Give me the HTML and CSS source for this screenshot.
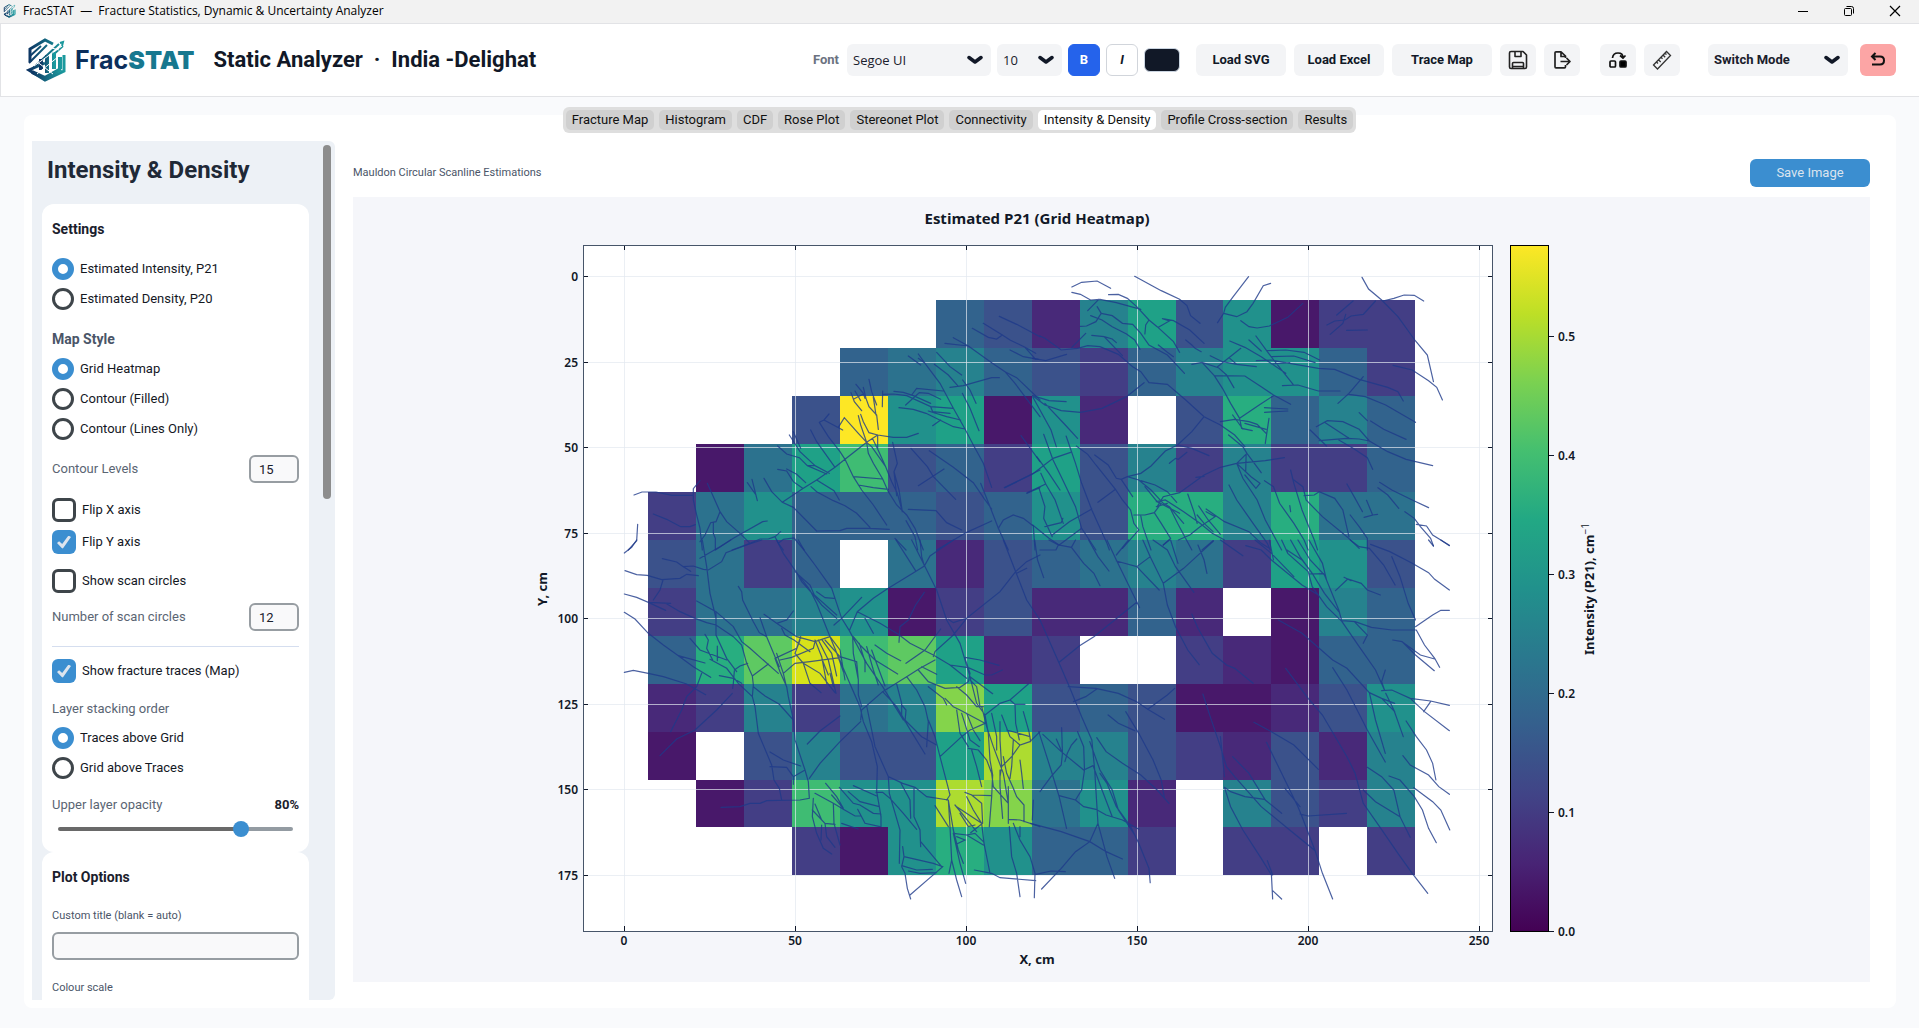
FILE: index.html
```html
<!DOCTYPE html>
<html lang="en">
<head>
<meta charset="utf-8">
<title>FracSTAT</title>
<link rel="stylesheet" href="styles.css">
</head>
<body>
<svg class="defs" width="0" height="0" aria-hidden="true">
  <defs>
    <linearGradient id="brand" x1="0" y1="0" x2="1" y2="0"><stop offset="0" stop-color="#0d3563"/><stop offset="1" stop-color="#1b9a9e"/></linearGradient>
    <symbol id="mark" viewBox="0 0 44 44">
      <g fill="none" stroke="url(#brand)" stroke-width="3">
        <path d="M4 24V11L19 2l8 4M38 17v16L19 42 3 32l16-7"/>
        <path d="M4 18 15 8M3 25 21 7M6 31 33 6M34 5l3-1-1 4M28 16l9-8" stroke-width="2"/>
        <path d="M15 32V21M21 35V17M28 31V14" stroke-width="4"/>
        <path d="M34 19v12M6 34l13 6 16-9" stroke-width="4"/>
      </g>
      <path d="M8 28 36 8M11 36 38 14M10 23 27 36M22 9 33 12" stroke="#fff" stroke-width="1" fill="none"/>
    </symbol>
    <symbol id="chevron" viewBox="0 0 16 10"><path d="M2 2.500 8 7l6-4.500" fill="none" stroke="#111827" stroke-width="3.500" stroke-linecap="round" stroke-linejoin="round"/></symbol>
  </defs>
</svg>

<div class="titlebar">
  <svg class="app-icon"><use href="#mark"/></svg>
  <span class="app-name">FracSTAT  —  Fracture Statistics, Dynamic &amp; Uncertainty Analyzer</span>
  <button class="win" aria-label="Minimise"><svg width="12" height="12"><path d="M1 6.500h10" stroke="#000" fill="none"/></svg></button>
  <button class="win" aria-label="Restore"><svg width="12" height="12" fill="none" stroke="#000"><rect x="1.500" y="3.500" width="7" height="7" rx="1"/><path d="M3.500 1.500h5q2 0 2 2v5"/></svg></button>
  <button class="win" aria-label="Close"><svg width="12" height="12"><path d="m1 1 10 10M11 1 1 11" stroke="#000" stroke-width="1.200" fill="none"/></svg></button>
</div>

<header class="toolbar">
  <svg class="logo"><use href="#mark"/></svg>
  <span class="wordmark">Frac<b>STAT</b></span>
  <h1>Static Analyzer &nbsp;·&nbsp; India -Delighat</h1>
  <div class="tools fonts">
    <label for="family">Font</label>
    <span class="pick family"><select id="family"><option>Segoe UI</option></select><svg><use href="#chevron"/></svg></span>
    <span class="pick size"><select aria-label="Font size"><option>10</option></select><svg><use href="#chevron"/></svg></span>
    <button class="toggle on">B</button>
    <button class="toggle"><i>I</i></button>
    <button class="swatch" aria-label="Text colour"></button>
  </div>
  <div class="tools files">
    <button class="btn">Load SVG</button>
    <button class="btn">Load Excel</button>
    <button class="btn wide">Trace Map</button>
    <button class="btn icon" aria-label="Save"><svg width="20" height="20" fill="none" stroke="#222" stroke-width="1.600" stroke-linejoin="round"><path d="M1.500 3q0-1.500 1.500-1.500h12L18.500 5v12q0 1.500-1.500 1.500H3q-1.500 0-1.500-1.500zM7 1.500v5h6v-5M4.500 18.500v-5q0-1 1-1h9q1 0 1 1v5M4.500 16.500h11"/></svg></button>
    <button class="btn icon" aria-label="Export"><svg width="20" height="20" fill="none" stroke="#222" stroke-width="1.700" stroke-linejoin="round"><path d="M13.500 8V6L9 1.800H4q-1 0-1 1v14q0 1 1 1h8.500q1 0 1-1V15M9 2v4.500h4.500M8.500 11.500h9M14.500 8l3.500 3.500-3.500 3.500"/></svg></button>
  </div>
  <div class="tools">
    <button class="btn icon" aria-label="Swap"><svg width="20" height="20" fill="none" stroke="#111" stroke-width="1.700"><rect x="2" y="11" width="5.500" height="6" rx="1"/><rect x="12" y="11" width="6" height="6" rx="1" fill="#000"/><path d="M4.500 8Q5 3 10 3t5 4.500M12 5.500l3 2.500 2.500-2.500"/></svg></button>
    <button class="btn icon" aria-label="Measure"><svg width="20" height="20" fill="none" stroke="#333" stroke-width="1.300"><path d="m1.500 15 13-13.500 4 4-13 13.500zM4.500 12l1.500 1.500M6.500 9.800l2.200 2.200M9 7.300l1.500 1.500M11 5l2.200 2.200M13 3l1.500 1.500"/></svg></button>
  </div>
  <div class="tools mode">
    <span class="pick switch"><select aria-label="Mode"><option>Switch Mode</option></select><svg><use href="#chevron"/></svg></span>
    <button class="btn icon back" aria-label="Back"><svg width="20" height="20" fill="none" stroke="#111" stroke-width="2"><path d="M7.500 3 4 6.500 7.500 10M4 6.500h8q4 0 4 4t-4 4H4"/></svg></button>
  </div>
</header>

<nav class="tabs">
  <button>Fracture Map</button><button>Histogram</button><button>CDF</button><button>Rose Plot</button><button>Stereonet Plot</button><button>Connectivity</button><button class="current">Intensity &amp; Density</button><button>Profile Cross-section</button><button>Results</button>
</nav>

<main class="panel">
  <aside class="sidebar">
    <div class="scroll">
      <h2>Intensity &amp; Density</h2>
      <section class="card">
        <h3>Settings</h3>
        <div class="group after-head">
          <label class="radio"><input type="radio" name="measure" checked>Estimated Intensity, P21</label>
          <label class="radio"><input type="radio" name="measure">Estimated Density, P20</label>
        </div>
        <h4>Map Style</h4>
        <div class="group">
          <label class="radio"><input type="radio" name="style" checked>Grid Heatmap</label>
          <label class="radio"><input type="radio" name="style">Contour (Filled)</label>
          <label class="radio"><input type="radio" name="style">Contour (Lines Only)</label>
        </div>
        <div class="field levels"><label for="levels">Contour Levels</label><input id="levels" type="text" value="15"></div>
        <div class="group flips">
          <label class="check"><input type="checkbox">Flip X axis</label>
          <label class="check"><input type="checkbox" checked>Flip Y axis</label>
        </div>
        <label class="check scan"><input type="checkbox">Show scan circles</label>
        <div class="field"><label for="circles">Number of scan circles</label><input id="circles" type="text" value="12"></div>
        <hr>
        <label class="check"><input type="checkbox" checked>Show fracture traces (Map)</label>
        <p class="sub">Layer stacking order</p>
        <div class="group">
          <label class="radio"><input type="radio" name="stack" checked>Traces above Grid</label>
          <label class="radio"><input type="radio" name="stack">Grid above Traces</label>
        </div>
        <div class="sub split"><label for="opacity">Upper layer opacity</label><output for="opacity">80%</output></div>
        <input id="opacity" class="slider" type="range" min="0" max="100" value="80">
      </section>
      <section class="card">
        <h3>Plot Options</h3>
        <label class="small" for="custom">Custom title (blank = auto)</label>
        <input id="custom" class="full" type="text">
        <p class="small">Colour scale</p>
      </section>
    </div>
    <div class="bar"></div>
  </aside>

  <section class="view">
    <div class="view-head"><span>Mauldon Circular Scanline Estimations</span><button class="save">Save Image</button></div>
    <div class="plot">
      <svg viewBox="353 197 1517 785" id="chart" role="img" aria-label="Estimated P21 grid heatmap">
        <defs>
          <linearGradient id="scale" x1="0" y1="1" x2="0" y2="0">
            <stop offset="0" stop-color="#440154"/><stop offset=".1" stop-color="#482475"/><stop offset=".2" stop-color="#414487"/><stop offset=".3" stop-color="#355f8d"/><stop offset=".4" stop-color="#2a788e"/><stop offset=".5" stop-color="#21918c"/><stop offset=".6" stop-color="#22a884"/><stop offset=".7" stop-color="#44bf70"/><stop offset=".8" stop-color="#7ad151"/><stop offset=".9" stop-color="#bddf26"/><stop offset="1" stop-color="#fde725"/>
          </linearGradient>
        </defs>
        <rect x="583" y="245" width="910" height="686" fill="#fff"/>
        <g id="cells" shape-rendering="crispEdges"></g>
        <path class="grid" d="M624.500 246v685M795.500 246v685M966.500 246v685M1137.500 246v685M1308.500 246v685M1479.500 246v685M584 276.500h908M584 362.500h908M584 447.500h908M584 533.500h908M584 618.500h908M584 704.500h908M584 789.500h908M584 875.500h908"/>
        <g class="traces">
          <path transform="translate(520 190) scale(.33333)" d="M342 915 366 906 408 906 456 916 520 916 520 896 540 872M520 896 520 930 530 975 540 1015 547 1080M400 972 440 988 482 1010 510 1010 526 1004M353 1003 350 1052 325 1080M562 880 600 965 620 995 660 1030 690 1060M600 965 588 995 572 998 555 1035 540 1055M580 998 580 1030 586 1045 586 1080M586 1080 640 1045 728 995 742 993M636 1080 690 1060 720 1047 745 1047 765 1040 782 1025M765 1040 775 1060 790 1048 822 1044 852 1080M775 1060 790 1080M682 878 708 915M696 868 712 932M732 865 755 905 787 937 820 952 890 1023M787 937 850 895 890 870 945 832 975 808 1040 757 1073 735M873 890 890 905 940 932 975 947 1010 970 1050 1012M890 870 942 902 958 930M773 838 800 843 820 875 848 895M800 837 830 853 857 878M773 768 800 792 838 803 862 827 885 827 928 850M862 827 920 852M808 735 840 785 885 827M820 725 842 775M872 720 890 755 945 832M898 697 925 740 960 785 975 808 1000 860 1025 900 1060 945 1100 1005M898 697 912 690 927 672M912 690 950 710 968 720M955 712 973 683 1015 730 1040 757 1055 770 1097 830M1015 677 1022 705 1040 757 1045 790 1060 820 1088 867 1105 905 1130 945 1160 975 1185 1015 1210 1080M1022 673 1030 695 1047 728 1073 735 1120 742 1160 742 1195 730M1057 745 1073 777 1097 830 1115 875 1132 910 1147 965M1073 735 1073 777M1000 860 1088 867M1015 885 1060 893 1105 898M993 608 1003 635 1025 662M1005 603 1022 632M1008 583 1030 610 1035 625M1000 628 1030 612M1030 592 1038 625 1047 650 1070 675 1075 718M1047 568 1055 605 1070 645M1060 622 1068 675M1088 603 1087 650M1088 613 1120 612 1160 617 1232 650 1300 655M1122 604 1150 607 1180 617 1232 640M1157 645 1198 608 1225 610 1262 628M1175 615 1190 595 1270 603M1137 653 1180 658 1218 670 1300 710 1335 717M1232 650 1238 665 1290 670M1225 663 1280 680 1322 690M1238 707 1262 690M1165 498 1202 525M1195 492 1215 520 1260 580 1300 655 1335 717 1360 765 1390 820 1415 892M1195 505 1215 520M1250 487 1290 530 1325 555M1243 523 1285 555 1313 587M1290 592 1330 587 1415 563 1438 563M1328 570 1350 600 1368 640M1327 610 1350 655 1377 722M1275 460 1345 468M1300 443 1345 468 1415 518 1455 545 1485 580 1560 680M1455 545 1490 563 1560 630M1357 415 1405 442 1430 447 1447 435M1390 400 1447 435 1470 450 1515 472 1547 508M1438 379 1490 403 1560 440M1470 480 1510 500 1555 508M1515 472 1547 490M1118 757 1132 820 1122 845 1137 900 1147 965M1122 845 1130 917M1173 775 1222 830 1240 860 1307 928M1195 887 1272 837M1228 782 1300 832 1360 878 1392 925 1415 957M1382 880 1410 950 1435 1015 1465 1080M1165 958 1248 962 1280 998 1325 1020M890 1023 960 1022 980 1015 1050 1015 1108 1018M1158 992 1185 1040 1193 1080M1125 1045 1158 1080M1250 1080 1340 1027 1415 993M1435 1015 1450 990 1480 975 1510 985 1540 1008 1545 1080M1453 893 1500 870 1560 840M1520 910 1560 893M1503 737 1560 815"/>
          <path transform="translate(1000 190) scale(.40816 .33333)" d="M176 291 200 277 238 273 271 295M176 307 197 313 222 330M266 314 290 313 312 325 335 350 365 390 385 410 425 455 440 487M222 330 245 328 285 338 345 358M215 362 242 328M238 350 248 370 235 395 212 408 197 409M248 370 275 377 300 400 325 403 345 430 365 465 410 495 452 550M222 377 250 390 275 410 310 432 330 450 343 478M365 390 357 405 355 432M388 412 415 393 398 386M398 386 425 392 465 420 500 460M388 465 410 487 425 500M98 438 110 445 150 480 190 475 215 467 245 470 290 493 325 530 345 545 365 578 410 583 455 630 500 680 540 705 575 735 600 770M176 472 210 430M225 436 255 440 300 497M255 440 275 447 285 458M80 505 112 512 163 493M330 259 395 302 440 328 458 347 467 377 490 400M609 260 570 322 552 352 548 370 533 398M548 370 580 380 605 365 620 340 645 287 663 280M590 392 610 410 630 414 660 408 705 382 742 340M887 262 903 297 935 330 975 380 1018 453 1047 495 1062 575M938 333 965 325 990 315 1015 316 1038 333M963 526 1010 540 1050 572 1070 592 1084 630M865 333 825 375M920 333 890 373 860 378 845 390 820 393 801 405M847 373 840 400 809 433M849 421 900 420M563 453 600 472 640 500 700 550M610 450 640 483M627 438 655 485 680 525 718 583M533 530 590 475M515 497 545 515 580 523 628 530M563 505 580 523M655 482 700 480 745 487 783 510M665 500 720 498 772 518M628 512 665 510 710 520 780 535 820 538 880 568 950 592 975 605 988 633M665 522 710 518M470 523 495 517 535 533 555 555 573 593M495 517 525 557 545 595 565 640 587 685 592 715M525 557 600 558 640 590 670 615 712 643M455 450 470 465 478 475 493 485M692 587 730 585 780 603 833 603M828 640 855 610 890 560M855 613 895 620 945 645 1018 697M587 685 635 645 670 617M648 653 705 657M648 667 705 663M540 695 575 688 610 695 630 703 652 730M570 675 595 717M600 700 652 718M659 685 650 760M592 715 618 722M775 710 802 692 840 695 880 718 905 753 950 785 995 808 1060 827M880 668 900 692M908 693 940 718 995 748M795 697 855 745M760 720 800 768M782 752 850 745 880 747 905 753M830 750 865 775 900 803 913 838M500 680 470 725 435 765 405 783 370 828 345 850 312 860 297 868M435 765 470 775 512 797M415 820 430 805 437 808 458 787M560 735 595 770 605 790 640 848M697 803 650 812 580 820 540 832 500 855 440 908 400 920 385 950M605 790 580 820M603 795 602 843M480 862 500 859M580 820 615 860 637 880 627 895 600 855M580 820 595 865 630 930 650 990 690 1080M561 885 580 930 620 1000 655 1060 662 1080M648 872 670 890 685 940 720 1000 745 1050 755 1080M712 840 720 880 740 960 770 1050 778 1080M720 870 742 890 750 930 790 980 850 1040 880 1075M745 917 770 915 782 905 820 925 840 960 855 1040M710 947 712 965M850 882 870 925 888 965M898 931 913 975 892 982M913 975 925 973M926 893 950 915 977 955M930 877 960 900 1010 930 1050 953M858 975 880 1010 900 1045M992 965 1015 985 1030 1010 1055 1045 1062 1068M1020 1003 1045 1008 1060 1035 1101 1066M312 860 340 870 370 900 400 940 415 950 450 1000M345 872 380 885 410 905 433 937M355 890 385 935 440 970M383 935 405 930 450 965 490 1000 520 1030 550 1050M383 950 410 940M328 975 355 975 378 968 395 940M460 912 475 965 483 1000M487 948 510 990 540 1033M505 957 550 995 610 1025 640 1060 660 1075M483 975 500 1000 522 1025M437 1050 465 1035 490 1010 527 980 505 965M297 868 325 920M240 937 283 898M232 795 265 825 285 865 297 868M187 768 215 793 235 825 283 898 300 930 320 960 328 1000 340 1020 300 1075M162 738 185 820 200 880 225 960 262 1060 268 1080M107 733 130 810 150 860 185 950 200 1015 235 1080M90 800 120 850 147 900M80 620 125 720 138 770M80 617 120 632 162 635M80 617 110 645 150 662 197 667 250 655 310 620 353 578M110 640 160 705 190 745M80 852 130 805 173 787M67 908 112 882 100 850M95 893 110 950 107 985 128 1040M112 882 135 930 155 1000M110 1010 150 998 154 985M128 1035 170 995 225 957M80 1005 120 1045 145 1065 200 1015M345 978 350 1010 370 1080M378 968 395 1000 418 1045 400 1065M415 950 435 1000 470 1080M495 1080 522 1052M900 1045 900 1080M12 893 80 852"/>
          <path transform="translate(520 540) scale(.33333)" d="M313 39 335 22 350 0M427 56 470 66 490 80 512 94M490 80 520 78 550 88 565 90 605 65 618 38 680 15 725 0M540 55 600 20 632 0M315 92 350 104 382 106 425 119 480 115 500 103 535 107M429 120 420 150 400 180M313 162 350 172 385 187 452 190M385 187 437 211M437 190 480 215 525 235 560 248 588 255 640 290 665 315 680 370 697 408M313 217 345 237 385 280 430 315 475 347 555 369M475 347 520 380 572 412M313 397 340 391 385 400 430 410 500 432 557 464M545 400 530 440 500 470 485 510 452 575M637 460 590 510 525 570 470 597 420 647M547 0 560 80 570 160 588 235 588 285 620 355 650 395M530 183 588 215 640 260 665 305 690 325 775 400M588 215 588 245M655 139 665 155 668 180 700 245 718 278 740 290M720 233 740 290M740 290 765 350 778 380M555 283 565 300 560 325 578 360M510 295 540 330 620 360M592 318 592 362M570 358 620 385 655 430 697 470 705 500 715 580 755 675 762 720 778 745 785 780M598 407 640 415 665 430M643 393 640 430 638 445M643 390 660 378 683 370M697 408 745 372M697 408 700 435 697 470M700 440 735 468 778 493 820 540M732 223 770 250 830 290 885 305 930 290M770 250 800 240 820 213M785 265 795 285 822 300 870 335M765 355 830 325 842 290M765 355 780 395 800 440 805 470 820 540 825 600 855 690 865 725 868 775 840 780 740 782 720 790 690 790 660 800 603 802M770 340 790 400 798 435M780 360 815 352 880 325 885 305M790 400 825 370 870 365 960 353M770 0 790 40 830 98 870 150 890 190 930 290 955 350 985 420 1020 500 1030 545 1055 605 1072 680 1070 755 1078 800 1083 830 1083 860M830 98 845 125 885 170 905 195 950 235M835 0 855 35 885 75 935 145 965 235 988 272 1040 370 1088 440 1097 455 1150 540M825 95 870 135 883 165 950 225M890 155 915 173 942 175M942 255 965 235 1025 172M988 272 1012 215 1060 175 1100 148 1188 94 1213 78 1230 48 1300 0M1012 215 1080 250 1135 283M1035 235 1060 280M1137 307 1140 260 1165 240 1187 195 1213 157M998 290 1000 340 1015 420 1015 465 1025 500M1000 290 1020 315 1065 360 1133 402M1018 310 1035 365 1035 395M1040 320 1060 390 1075 435M1055 330 1095 438M1065 315 1100 340 1142 362M1158 370 1215 330 1262 267M1135 283 1170 310 1210 330 1240 345 1290 375 1345 383 1395 405 1415 405 1447 390M1240 350 1245 335 1300 285 1340 235M1025 510 1088 455 1160 410 1200 385 1245 360M868 715 900 670 960 605 1022 545M1025 510 1022 540M862 612 900 573 960 528M1040 498 1055 570 1065 620 1105 710 1148 730 1185 742 1220 770 1285 780M1088 455 1130 500 1165 560 1215 642M1130 432 1145 490 1145 530 1205 590 1250 615M1145 495 1158 510 1155 545M1160 410 1190 450 1215 500 1225 545 1220 620M1225 540 1245 590 1260 650 1285 745 1290 765 1280 780M1260 650 1325 590M1195 390 1225 425 1275 445 1320 442 1345 425 1350 400 1335 355M1205 380 1250 403M1175 0 1210 70 1250 150 1280 240 1320 310 1350 410 1370 490 1395 525M1213 78 1205 50 1200 0M1128 0 1160 50 1188 94M1285 238 1300 248 1340 235 1440 155 1487 95 1520 65 1560 45M1450 0 1487 95 1520 180 1560 240M1490 100 1520 85M1335 352 1380 360 1437 376M1290 375 1340 415M1350 410 1418 461M1225 440 1270 475 1280 495M1275 475 1300 500 1320 510 1395 550M1310 440 1340 465 1370 500 1390 500M1350 420 1370 440 1380 500M1395 525 1440 490 1470 480 1525 432M1470 480 1485 493 1515 493M1485 493 1487 550 1498 600M1510 515 1527 575 1532 605M1530 605 1560 575M1310 510 1320 580 1345 620M1325 520 1350 600 1378 620M1340 520 1360 570 1380 602M1325 590 1350 570 1395 550M1345 625 1375 630 1400 660 1415 700M1355 630 1370 680 1385 740M1385 500 1400 560 1420 620 1450 700 1465 790M1395 525 1405 580 1410 660 1418 705 1415 770 1408 860M1415 520 1430 590 1430 630M1440 545 1440 600 1445 680 1440 710M1445 525 1470 590 1500 615 1530 605M1460 570 1530 590M1500 615 1475 650 1445 680M1480 600 1475 680 1470 715M1450 650 1460 700 1480 745 1490 770 1512 795 1512 845M1500 660 1505 700 1510 745M1415 700 1420 740 1465 790M1335 757 1355 765 1415 767M1440 690 1440 740 1448 835M1465 740 1465 850M1465 838 1500 840 1560 860M1245 797 1285 860M1285 780 1290 860 1295 960 1287 1000M1285 780 1300 870 1315 930 1330 970M1295 960 1310 1020 1325 1070M1300 880 1320 970 1337 1030M1305 795 1350 850 1370 875M1310 800 1385 850M1320 820 1345 860 1365 855M1340 770 1360 810 1385 850M1355 765 1385 790 1388 850 1352 878M1300 880 1340 885 1390 915M1310 912 1335 900 1310 890M1340 885 1365 880 1390 905M1385 850 1392 910 1405 975 1410 1000M1363 990 1415 1000 1440 1013 1547 1022M1468 860 1475 950 1490 1000 1500 1070M1480 850 1500 900 1530 950 1545 1000 1543 1073M1500 860 1500 890M1540 780 1537 840M1148 920 1152 950 1145 980 1155 1000 1162 1045 1172 1077M1152 950 1240 970 1268 980 1245 1000 1170 1065M1145 977 1190 990 1237 988M1165 993 1200 1000 1250 998M1105 710 1108 760 1140 870 1138 970M1068 757 1088 757 1110 775 1150 820 1190 868M1143 730 1170 780 1172 835M1182 745 1182 830 1200 870 1202 920M1202 905 1265 980M1000 737 1070 768M985 755 1020 785 1078 800M958 742 1000 790 1020 795 1060 820 1083 822M917 730 950 770 970 805M885 760 940 790 970 808 1005 828 1022 828M935 765 970 805M1013 808 1035 850 1080 860M965 850 1000 862 1015 867M880 775 877 830 890 880 910 925 935 942M885 792 905 840M877 810 915 850 945 853M940 790 942 850 960 915M905 855 903 900M915 850 920 890 945 922M750 636 790 660 842 678M750 680 800 682 820 710 855 690M820 710 820 733M885 300 905 350 920 430M895 300 925 360 948 460M905 298 935 340 950 408M915 300 960 350M840 300 825 340 850 370 870 430 903 458M850 370 900 400 945 458M930 290 960 330 975 420M930 400 940 440M907 360 925 405M945 325 970 395M960 350 1010 365 1015 420"/>
          <path transform="translate(1000 540) scale(.40816 .33333)" d="M98 30 137 30 143 15 175 22 205 70 230 100 245 137M98 240 145 370 170 440 200 530 225 600 232 690 240 850 262 950 281 1015M120 0 143 15M85 0 92 60 107 113M175 22 185 0M217 0 240 50 267 93M262 0 285 60 335 185 342 203M285 45 315 0M285 63 335 80 368 50 350 0M335 80 390 150M368 50 400 130 410 195 430 260 460 330 488 374M375 0 410 30 430 80 475 157M400 130 450 85 490 40 523 3M418 0 436 70M485 15 500 60 507 100M400 15 415 0M145 367 195 317 230 290 335 187M540 0 575 30 595 47M602 17 640 30 665 60 700 95 740 135 780 165M625 0 665 40 720 110M660 0 670 60M690 0 705 40 755 95 765 140 800 200 838 245M712 0 735 50 765 100 795 160 830 215M730 0 760 60 795 105 830 210 838 245 880 320 920 390 942 450M757 102 793 101M757 0 790 70 800 120M703 30 740 60 765 100M822 152 852 117 885 130 900 150 932 165M843 112 860 122M858 0 880 20 905 25 940 75 968 135M908 13 955 35 1010 70 1050 98 1065 118 1101 150M960 50 980 110 1000 190 1018 240M1050 0 1062 18M1080 0 1101 17M1018 260 1060 225 1080 211 1101 211M838 242 870 245 910 262 960 270 1020 270 1040 315 1065 355 1077 382M868 245 900 285 890 310M962 300 985 305 1018 345 1064 392M985 305 1030 345 1065 357M682 240 740 280 815 360 850 385 905 458 935 475 967 490M942 450 935 425 944 390M935 452 960 450 1005 475 1055 483 1101 496M1005 475 1040 515 1101 572M1038 515 1055 485M905 458 920 540 944 640M945 460 965 510 988 590M935 475 967 515M815 383 850 450 900 570 944 666M470 222 485 265 520 340 555 375 575 385 620 430M167 440 235 445 290 460 335 485 362 508 403 538M180 485 210 470 237 447M362 508 410 465 428 445M265 525 290 550 330 572M308 515 340 580 375 660 395 720 403 775M700 385 755 475 790 525 850 650 870 700 890 790 930 860 975 940 1010 1000 1048 1060M497 462 515 530 540 620 555 680 575 710 640 800 700 860 772 932 790 1000 815 1077M540 590 550 710M622 547 665 575 720 615 780 688M653 607 690 700 730 800 740 830 772 932M570 650 610 700 650 780 690 820M550 742 565 755 600 770 648 778M550 742 565 800 595 870 640 955 665 1005 668 1077M655 962 668 1005M668 1052 690 1077M698 745 735 800M735 822 755 828 849 820M995 543 1020 590 1045 630 1060 670 1068 720M987 647 1005 675 1050 705 1075 740 1101 763M953 708 980 720 1015 770 1035 810 1050 865 1069 908M1014 743 1060 785 1080 810 1102 870M900 682 935 710 965 750 980 830 1005 892M890 750 920 785 980 830M95 575 125 690 145 770 163 865M105 583 150 635 205 690 228 677M151 563 153 640 150 675 125 710 98 755M138 597 153 640M188 597 175 615 165 640 159 665M190 575 205 620 207 690 200 750 185 780M145 767 185 780 205 800 235 808 260 825 300 840 340 868M237 593 260 635 300 670 345 705 385 750 414 790M220 605 245 690 275 750 290 810 330 885M245 700 262 730 285 800 320 860 340 910 365 985 368 1028M228 677 250 750 275 830M75 850 150 875 220 905 260 935 300 957M240 850 220 905 185 935 150 985 102 1047M88 1003 125 993 160 995"/>
        </g>
        <rect class="frame" x="583.500" y="245.500" width="909" height="686"/>
        <path class="ticks" d="M624.500 931v-5M795.500 931v-5M966.500 931v-5M1137.500 931v-5M1308.500 931v-5M1479.500 931v-5M624.500 246v4M795.500 246v4M966.500 246v4M1137.500 246v4M1308.500 246v4M1479.500 246v4M584 276.500h4M584 362.500h4M584 447.500h4M584 533.500h4M584 618.500h4M584 704.500h4M584 789.500h4M584 875.500h4M1492 276.500h-4M1492 362.500h-4M1492 447.500h-4M1492 533.500h-4M1492 618.500h-4M1492 704.500h-4M1492 789.500h-4M1492 875.500h-4M1549 336.500h5M1549 455.500h5M1549 574.500h5M1549 693.500h5M1549 812.500h5M1549 931.500h5"/>
        <rect x="1510.500" y="245.500" width="38" height="686" fill="url(#scale)" stroke="#000"/>
        <text class="title" x="1037" y="224">Estimated P21 (Grid Heatmap)</text>
        <g class="num end"><text x="578" y="281">0</text><text x="578" y="367">25</text><text x="578" y="452">50</text><text x="578" y="538">75</text><text x="578" y="623">100</text><text x="578" y="709">125</text><text x="578" y="794">150</text><text x="578" y="880">175</text></g>
        <g class="num mid"><text x="624" y="945">0</text><text x="795" y="945">50</text><text x="966" y="945">100</text><text x="1137" y="945">150</text><text x="1308" y="945">200</text><text x="1479" y="945">250</text></g>
        <g class="num"><text x="1558" y="341">0.5</text><text x="1558" y="460">0.4</text><text x="1558" y="579">0.3</text><text x="1558" y="698">0.2</text><text x="1558" y="817">0.1</text><text x="1558" y="936">0.0</text></g>
        <text class="axis" x="1037" y="964">X, cm</text>
        <text class="axis" transform="translate(547 589) rotate(-90)">Y, cm</text>
        <text class="axis" transform="translate(1594 589) rotate(-90)">Intensity (P21), cm<tspan class="sup" dy="-5">−1</tspan></text>
      </svg>
    </div>
  </section>
</main>
<script src="plot.js"></script>
</body>
</html>
```
FILE: plot.js
```js
// Heatmap cells: one letter per colour step, "." for an empty cell.
const palette = {
  a: '#48186a', b: '#482979', c: '#433e85', d: '#3b528b', e: '#32638d',
  f: '#2c728e', g: '#26828e', h: '#21918c', i: '#1fa187', j: '#28ae80',
  k: '#3fbc73', l: '#5ec962', m: '#84d44b', n: '#addc30', o: '#d8e219', p: '#fde725'
};
const rows = [
  '......edbgidhacc',
  '....efgedceghhec',
  '...dphiahb.djege',
  '.afikdecidgcgcce',
  'cfheeedehdjjgjff',
  'dfce.fbdefgfcihd',
  'cffghacdbbeb.age',
  'ejloklibc..cbaee',
  'bcgcfgmidedaabdh',
  'a.dgddinggdcbdbg',
  '.ackhhnmfhb.gdcg',
  '...cahjheec.cc.c'
];
const xs = [648, 696, 744, 792, 840, 888, 936, 984, 1032, 1080, 1128, 1176, 1223, 1271, 1319, 1367, 1415];
const ys = [300, 348, 396, 444, 492, 540, 588, 636, 684, 732, 780, 827, 875];
const layer = document.getElementById('cells');

rows.forEach((row, r) => {
  [...row].forEach((key, c) => {
    if (key === '.') return;
    const cell = document.createElementNS('http://www.w3.org/2000/svg', 'rect');
    cell.setAttribute('x', xs[c]);
    cell.setAttribute('y', ys[r]);
    cell.setAttribute('width', xs[c + 1] - xs[c]);
    cell.setAttribute('height', ys[r + 1] - ys[r]);
    cell.setAttribute('fill', palette[key]);
    layer.append(cell);
  });
});
```
FILE: styles.css
```css
* { box-sizing: border-box; }
body {
  margin: 0;
  height: 100vh;
  display: flex;
  flex-direction: column;
  overflow: hidden;
  background: #f9fafc;
  font: 13px/20px Roboto, "Liberation Sans", sans-serif;
  color: #1a202c;
}
button, select, input { font: inherit; color: inherit; margin: 0; }
button { border: 0; padding: 0; }
h1, h2, h3, h4, p { margin: 0; }
.defs { position: absolute; }

.titlebar {
  flex: none;
  height: 24px;
  display: flex;
  align-items: center;
  padding: 0 18px 2px 3px;
  background: #f2f2f2;
  border-bottom: 1px solid #e2e3e6;
}
.app-icon { width: 14px; height: 14px; }
.app-name { margin: 0 auto 0 6px; font: 12px/20px "Open Sans", sans-serif; color: #000; white-space: pre; }
.win { width: 12px; height: 12px; margin-left: 34px; background: none; line-height: 0; }

.toolbar {
  flex: none;
  height: 73px;
  display: flex;
  align-items: center;
  padding: 0 23px 0 25px;
  background: #fff;
  border: 1px solid #e2e3e6;
  border-width: 0 0 1px 1px;
}
.logo { width: 44px; height: 46px; }
.wordmark { margin-left: 5px; font: 700 25px/28px Inter, sans-serif; color: #0c2f5c; }
.wordmark b { color: #17788f; }
h1 { margin: 0 auto 0 19px; font-size: 22px; line-height: 28px; color: #111827; white-space: nowrap; }
.tools { display: flex; align-items: center; gap: 8px; margin-left: 20px; }
.fonts { gap: 6px; }
.files { margin-left: 16px; }
.mode { gap: 12px; margin-left: 28px; }
.tools label { font-weight: 700; color: #6b7280; margin-right: 2px; }
.pick { display: grid; align-items: center; height: 32px; background: #f3f4f6; border-radius: 6px; }
.pick select { grid-area: 1 / 1; width: 100%; height: 32px; padding: 0 6px; appearance: none; border: 0; background: none; }
.pick svg { grid-area: 1 / 1; justify-self: end; width: 16px; height: 10px; margin-right: 8px; pointer-events: none; }
.family { width: 144px; }
.size { width: 65px; }
.family select, .size select { font-family: "Open Sans", sans-serif; }
.switch { width: 140px; font-weight: 700; }
.toggle { width: 32px; height: 32px; border: 1px solid #d1d5db; border-radius: 6px; background: #fff; font-weight: 700; color: #111827; }
.toggle.on { background: #2563eb; border-color: #2563eb; color: #fff; }
.swatch { width: 36px; height: 24px; border: 1px solid #cbd5e1; border-radius: 6px; background: #111827; }
.btn { width: 90px; height: 32px; border-radius: 6px; background: #f3f4f6; font-weight: 700; color: #111827; }
.wide { width: 100px; }
.icon { width: 36px; display: grid; place-items: center; }
.back { background: #fca5a5; }

.tabs {
  flex: none;
  position: relative;
  z-index: 1;
  display: flex;
  gap: 5px;
  align-self: center;
  margin: 10px 0 -18px;
  padding: 3px;
  border-radius: 6px;
  background: #dedede;
}
.tabs button { height: 20px; padding: 0 6px; border-radius: 5px; background: #d0d0d0; color: #111; }
.tabs .current { background: #fff; }

.panel {
  flex: 1;
  min-height: 0;
  display: flex;
  gap: 18px;
  margin: 0 23px 20px 24px;
  padding: 26px 26px 8px 8px;
  border-radius: 8px;
  background: #fff;
}
.sidebar { flex: none; width: 303px; display: flex; overflow: hidden; padding-left: 10px; background: #edf1f6; border-radius: 0 6px 6px 0; }
.scroll { width: 267px; overflow: hidden; }
.bar { width: 8px; height: 354px; margin: 4px 0 0 14px; border-radius: 4px; background: #8d8d8d; }
h2 { padding: 15px 5px 20px; font-size: 24px; line-height: 28px; color: #1f2937; }
.card { padding: 15px 10px; border-radius: 12px; background: #fff; }
h3 { font-size: 14px; line-height: 20px; }
h4 { margin: 15px 0 5px; font-size: 14px; line-height: 20px; color: #4a5568; }
.after-head { margin-top: 15px; }
.radio, .check { display: flex; align-items: center; height: 30px; gap: 6px; color: #14181f; }
.check { height: 32px; }
.radio input, .check input { flex: none; appearance: none; width: 22px; height: 22px; border: 3px solid #3e454a; border-radius: 50%; }
.radio input:checked { border: 6px solid #3b8ed0; }
.check input { width: 24px; height: 24px; border-radius: 6px; }
.check input:checked { display: grid; place-items: center; border: 0; background: #3b8ed0; }
.check input:checked::after {
  content: "";
  width: 14px;
  height: 13px;
  background: #dce4ee;
  clip-path: polygon(0 58%, 15% 45%, 37% 66%, 82% 0, 100% 12%, 42% 100%, 34% 96%);
}
.field { display: flex; justify-content: space-between; align-items: center; margin-top: 6px; }
.levels { margin: 11px 0; }
.field label, .sub { color: #5a6573; }
.field input, .full { height: 28px; padding: 0 8px; border: 2px solid #979da2; border-radius: 6px; background: #f9f9fa; }
.field input { width: 50px; }
.full { width: 100%; display: block; margin: 6px 0 18px; }
.scan { margin-top: 7px; }
hr { height: 1px; margin: 15px 0 8px; border: 0; background: #d5deef; }
.sub { margin: 12px 0 4px; }
.split { display: flex; justify-content: space-between; margin-bottom: 6px; }
.split output { font-weight: 700; color: #1a202c; }
.slider { display: block; width: calc(100% - 12px); height: 16px; margin: 0 6px; appearance: none; background: none; }
.slider::-webkit-slider-runnable-track { height: 4px; border-radius: 2px; background: linear-gradient(90deg, #696969 78%, #939ba2 78%); }
.slider::-webkit-slider-thumb { appearance: none; width: 16px; height: 16px; margin-top: -6px; border-radius: 50%; background: #3b8ed0; }
.small { display: block; font-size: 11px; color: #4a5568; }
h3 + .small { margin-top: 19px; }

.view { flex: 1; min-width: 0; display: flex; flex-direction: column; padding-bottom: 18px; }
.view-head { display: flex; justify-content: space-between; align-items: center; padding: 18px 0 10px; font-size: 11px; color: #4a5568; }
.save { width: 120px; height: 28px; border-radius: 6px; background: #3b8ed0; font-size: 13px; color: #dce4ee; }
.plot { flex: 1; min-height: 0; background: #f5f6fa; }
.plot svg { display: block; width: 100%; height: 100%; }
.grid { fill: none; stroke: #e2e8f0; stroke-opacity: .7; }
.traces path { fill: none; stroke: #1e3a8a; stroke-opacity: .8; stroke-width: 1.2px; vector-effect: non-scaling-stroke; stroke-linecap: round; }
.frame { fill: none; stroke: #475569; }
.ticks { fill: none; stroke: #0f172a; }
.plot text { font: 600 12px "Noto Sans", sans-serif; fill: #111827; }
.plot .title { font: 700 15px "Open Sans", sans-serif; text-anchor: middle; }
.plot .axis { font-size: 13px; font-weight: 700; text-anchor: middle; }
.plot .sup { font-size: 10px; font-weight: 400; }
.end { text-anchor: end; }
.mid { text-anchor: middle; }
```
